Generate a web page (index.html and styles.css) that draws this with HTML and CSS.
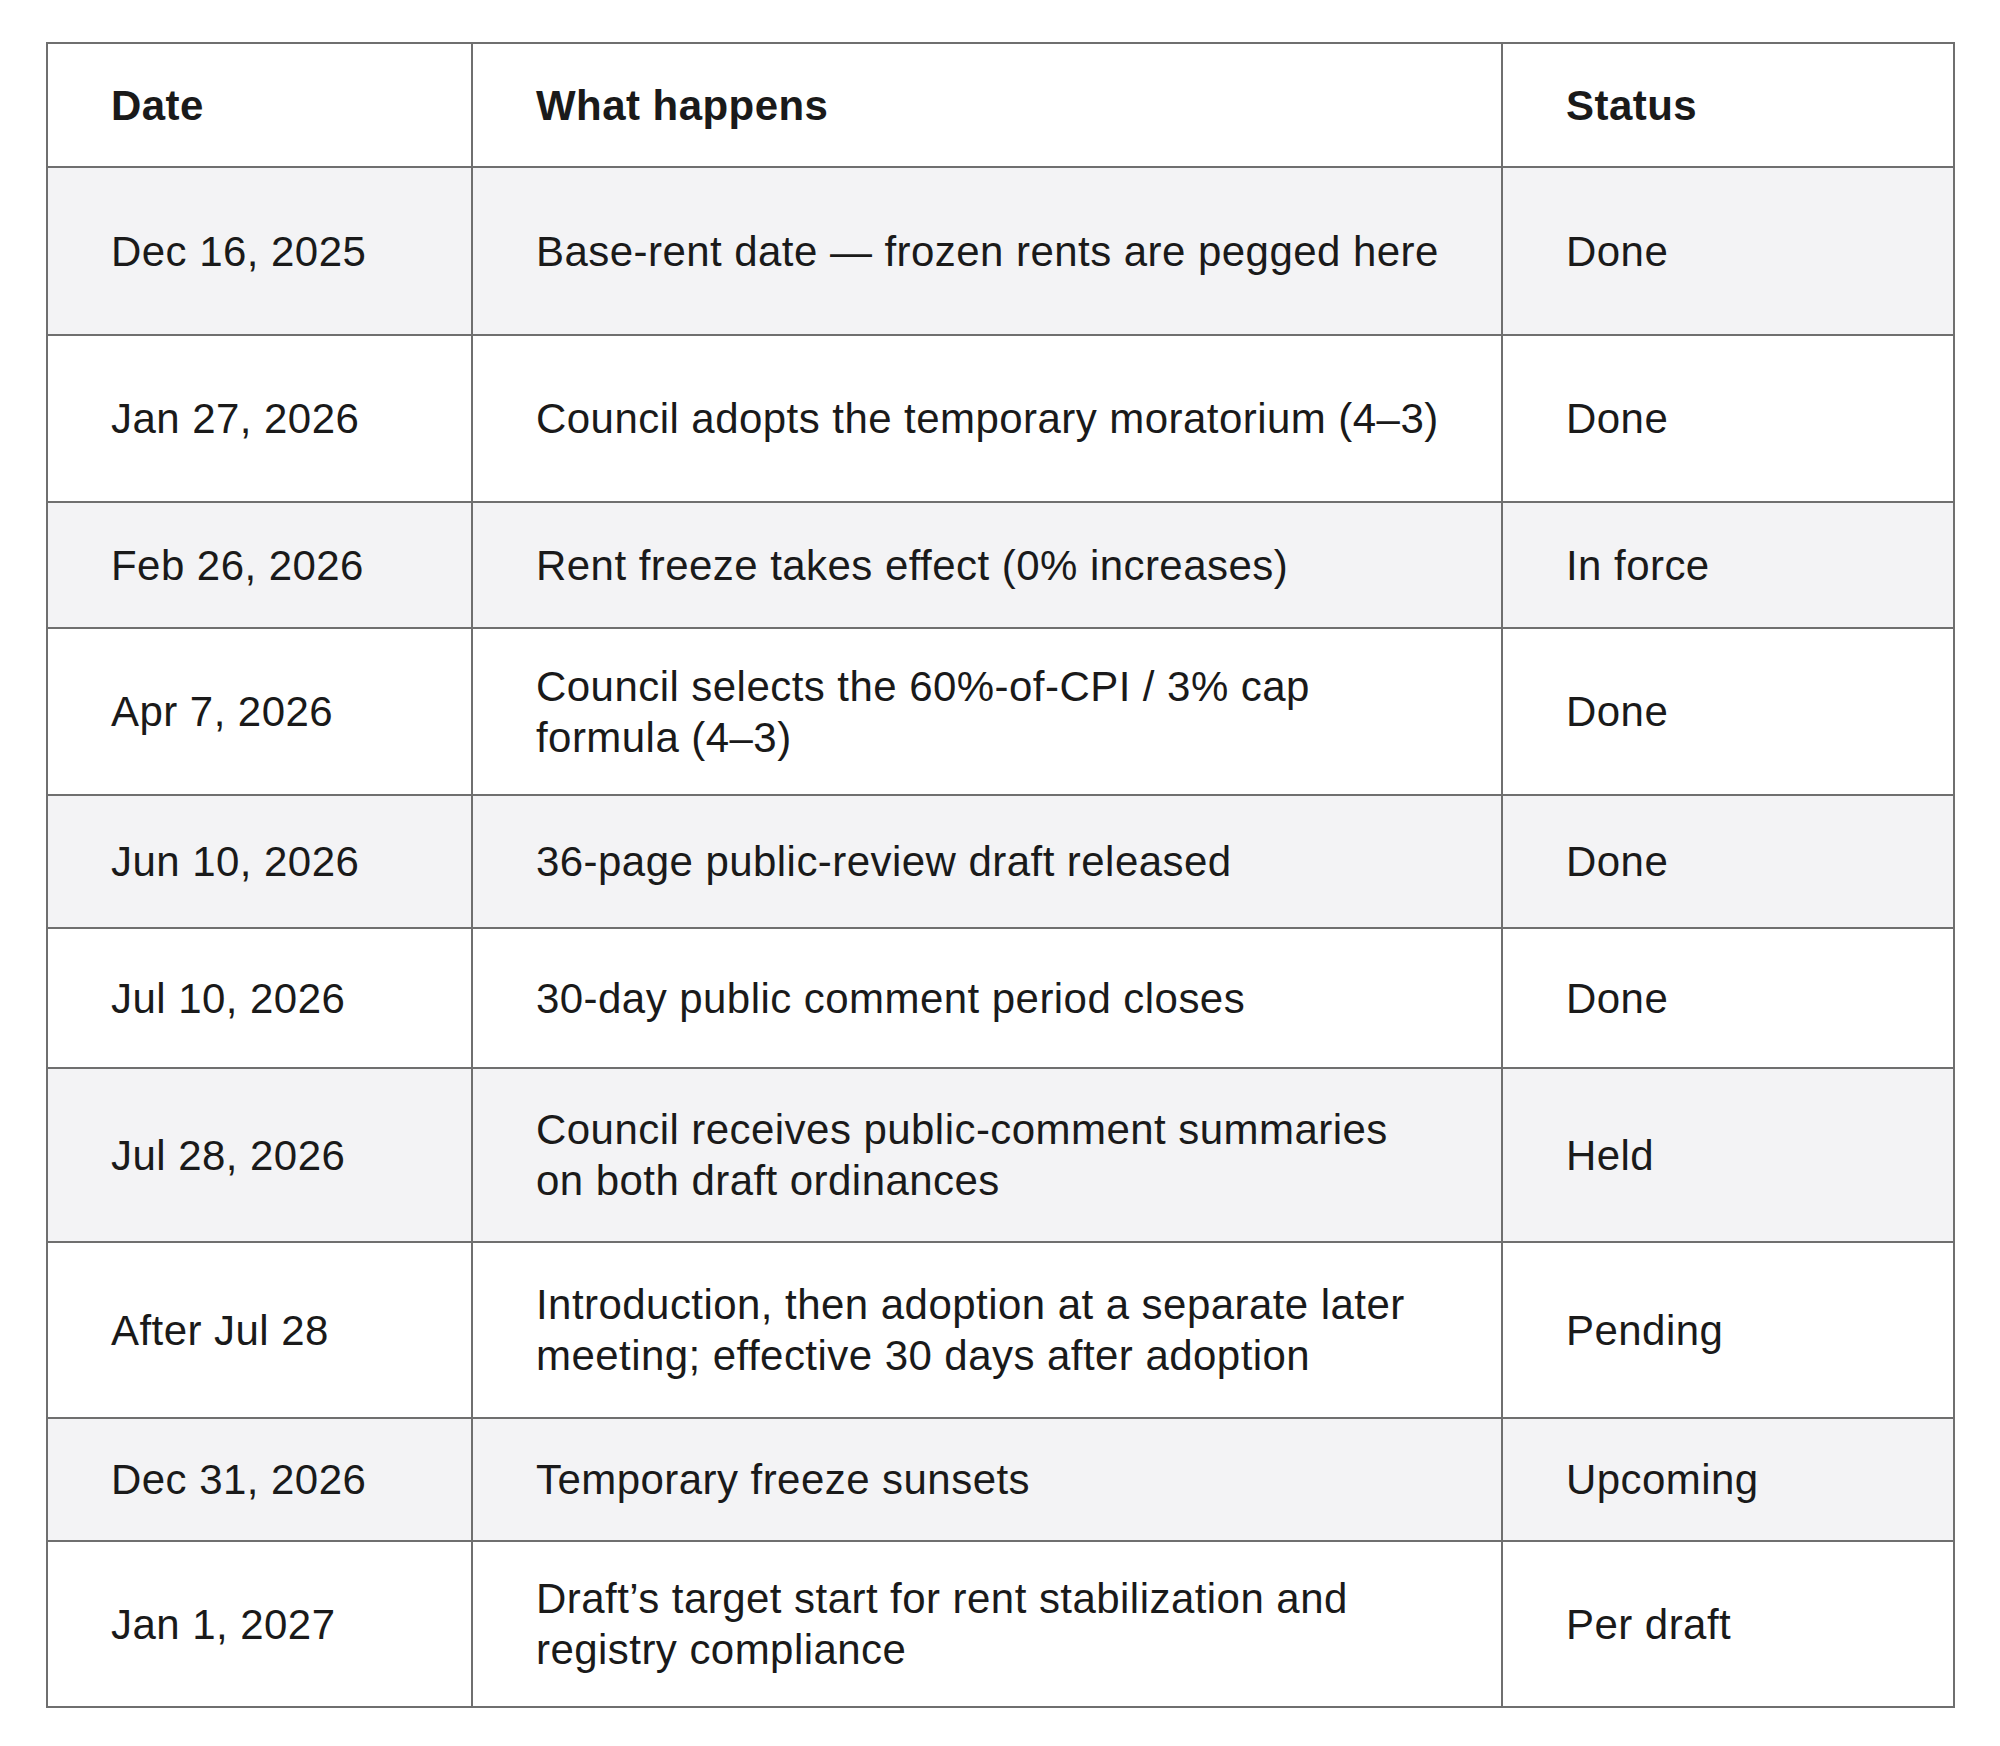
FILE: index.html
```html
<!DOCTYPE html>
<html lang="en">
<head>
<meta charset="utf-8">
<title>Timeline</title>
<link rel="stylesheet" href="styles.css">
</head>
<body>
<table class="timeline">
  <colgroup>
    <col class="c-date">
    <col class="c-what">
    <col class="c-status">
  </colgroup>
  <thead>
    <tr class="h124">
      <th class="date">Date</th>
      <th class="what">What happens</th>
      <th class="status">Status</th>
    </tr>
  </thead>
  <tbody>
    <tr class="h168 alt">
      <td class="date">Dec 16, 2025</td>
      <td class="what">Base-rent date — frozen rents are pegged here</td>
      <td class="status">Done</td>
    </tr>
    <tr class="h167">
      <td class="date">Jan 27, 2026</td>
      <td class="what">Council adopts the temporary moratorium (4–3)</td>
      <td class="status">Done</td>
    </tr>
    <tr class="h126 alt">
      <td class="date">Feb 26, 2026</td>
      <td class="what">Rent freeze takes effect (0% increases)</td>
      <td class="status">In force</td>
    </tr>
    <tr class="h167">
      <td class="date">Apr 7, 2026</td>
      <td class="what">Council selects the 60%-of-CPI / 3% cap<br>formula (4–3)</td>
      <td class="status">Done</td>
    </tr>
    <tr class="h133 alt">
      <td class="date">Jun 10, 2026</td>
      <td class="what">36-page public-review draft released</td>
      <td class="status">Done</td>
    </tr>
    <tr class="h140">
      <td class="date">Jul 10, 2026</td>
      <td class="what">30-day public comment period closes</td>
      <td class="status">Done</td>
    </tr>
    <tr class="h174 alt">
      <td class="date">Jul 28, 2026</td>
      <td class="what">Council receives public-comment summaries<br>on both draft ordinances</td>
      <td class="status">Held</td>
    </tr>
    <tr class="h176">
      <td class="date">After Jul 28</td>
      <td class="what">Introduction, then adoption at a separate later<br>meeting; effective 30 days after adoption</td>
      <td class="status">Pending</td>
    </tr>
    <tr class="h123 alt">
      <td class="date">Dec 31, 2026</td>
      <td class="what">Temporary freeze sunsets</td>
      <td class="status">Upcoming</td>
    </tr>
    <tr class="h166">
      <td class="date">Jan 1, 2027</td>
      <td class="what">Draft’s target start for rent stabilization and<br>registry compliance</td>
      <td class="status">Per draft</td>
    </tr>
  </tbody>
</table>
</body>
</html>
```

FILE: styles.css
```css
html, body {
  margin: 0;
  padding: 0;
  background: #ffffff;
}

body {
  font-family: "Liberation Sans", Arial, sans-serif;
  color: #1a1a1a;
}

.timeline {
  margin: 42px 0 0 46px;
  width: 1909px;
  table-layout: fixed;
  border-collapse: separate;
  border-spacing: 0;
  border-top: 2px solid #6f6f6f;
  border-left: 2px solid #6f6f6f;
  font-size: 42px;
  line-height: 51px;
  letter-spacing: 0.45px;
}

.c-date { width: 425px; }
.c-what { width: 1030px; }
.c-status { width: 452px; }

.timeline th,
.timeline td {
  box-sizing: border-box;
  padding: 0 20px 0 63px;
  border-right: 2px solid #6f6f6f;
  border-bottom: 2px solid #6f6f6f;
  text-align: left;
  vertical-align: middle;
  white-space: nowrap;
}

.timeline th {
  font-weight: 700;
}

.timeline td {
  font-weight: 400;
}

.timeline tr.alt td {
  background: #f3f3f5;
}

.h123 { height: 123px; }
.h124 { height: 124px; }
.h126 { height: 126px; }
.h133 { height: 133px; }
.h140 { height: 140px; }
.h166 { height: 166px; }
.h167 { height: 167px; }
.h168 { height: 168px; }
.h174 { height: 174px; }
.h176 { height: 176px; }
```
